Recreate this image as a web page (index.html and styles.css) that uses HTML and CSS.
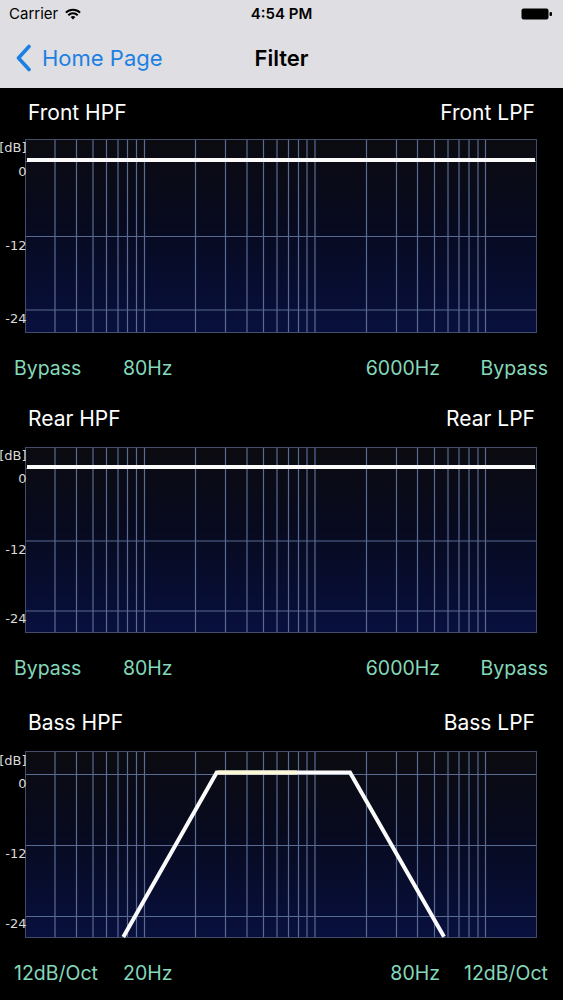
FILE: index.html
```html
<!DOCTYPE html>
<html lang="en">
<head>
<meta charset="utf-8">
<title>Filter</title>
<link rel="stylesheet" href="styles.css">
</head>
<body>
<header class="status-bar">
  <div class="status-left">
    <span class="carrier">Carrier</span>
    <svg class="wifi" width="16" height="12" viewBox="0 0 16 12">
      <path d="M0.9 4.6 A10 10 0 0 1 15.1 4.6" fill="none" stroke="#000" stroke-width="2"/>
      <path d="M3.3 7.2 A6.5 6.5 0 0 1 12.7 7.2" fill="none" stroke="#000" stroke-width="2"/>
      <path d="M8 11.5 L5.6 9.1 A3.4 3.4 0 0 1 10.4 9.1 Z" fill="#000"/>
    </svg>
  </div>
  <div class="status-time">4:54 PM</div>
  <div class="status-right">
    <svg class="battery" width="32" height="12" viewBox="0 0 32 12">
      <rect x="0.5" y="0.5" width="27" height="11" rx="2" fill="#000"/>
      <rect x="28.5" y="4" width="2.5" height="4" rx="1" fill="#000"/>
    </svg>
  </div>
</header>
<nav class="nav-bar">
  <div class="back">
    <svg class="chevron" width="16" height="28" viewBox="0 0 16 28">
      <polyline points="13,2.5 2.5,14 13,25.5" fill="none" stroke="#1c80e3" stroke-width="3.6" stroke-linecap="round" stroke-linejoin="round"/>
    </svg>
    <span class="back-label">Home Page</span>
  </div>
  <div class="nav-title">Filter</div>
  <div></div>
</nav>
<main class="content">
  <section class="filter filter--front">
    <div class="filter-head"><span>Front HPF</span><span>Front LPF</span></div>
    <svg class="graph" width="563" height="194" viewBox="0 0 563 194">
      <defs>
        <linearGradient id="bg1" x1="0" y1="0" x2="0" y2="1">
          <stop offset="0" stop-color="#0b0b10"/>
          <stop offset="0.45" stop-color="#070a1f"/>
          <stop offset="1" stop-color="#08103e"/>
        </linearGradient>
      </defs>
      <rect x="25" y="0" width="512" height="194" fill="url(#bg1)"/>
      <path class="grid" d="M55 0V194M76.5 0V194M93 0V194M106.5 0V194M118 0V194M127.5 0V194M136.5 0V194M144.5 0V194M195.5 0V194M225.5 0V194M247 0V194M263.5 0V194M277 0V194M288.5 0V194M298.5 0V194M307 0V194M315 0V194M366.5 0V194M396.5 0V194M417.5 0V194M434.5 0V194M448 0V194M459 0V194M469 0V194M478 0V194M485.5 0V194M25 22.5H537M25 97.5H537M25 171H537"/>
      <rect class="frame" x="25.5" y="0.5" width="511" height="193"/>
      <path class="curve" d="M27 21H535"/>
      <text class="axis-label" x="26.5" y="12.5">[dB]</text>
      <text class="axis-label" x="26.5" y="37">0</text>
      <text class="axis-label" x="26.5" y="110.5">-12</text>
      <text class="axis-label" x="26.5" y="184">-24</text>
    </svg>
    <div class="filter-values"><span>Bypass</span><span>80Hz</span><span class="end">6000Hz</span><span class="end">Bypass</span></div>
  </section>

  <section class="filter filter--rear">
    <div class="filter-head"><span>Rear HPF</span><span>Rear LPF</span></div>
    <svg class="graph" width="563" height="186" viewBox="0 0 563 186">
      <defs>
        <linearGradient id="bg2" x1="0" y1="0" x2="0" y2="1">
          <stop offset="0" stop-color="#0b0b10"/>
          <stop offset="0.45" stop-color="#070a1f"/>
          <stop offset="1" stop-color="#08103e"/>
        </linearGradient>
      </defs>
      <rect x="25" y="0" width="512" height="186" fill="url(#bg2)"/>
      <path class="grid" d="M55 0V186M76.5 0V186M93 0V186M106.5 0V186M118 0V186M127.5 0V186M136.5 0V186M144.5 0V186M195.5 0V186M225.5 0V186M247 0V186M263.5 0V186M277 0V186M288.5 0V186M298.5 0V186M307 0V186M315 0V186M366.5 0V186M396.5 0V186M417.5 0V186M434.5 0V186M448 0V186M459 0V186M469 0V186M478 0V186M485.5 0V186M25 21.5H537M25 94H537M25 164H537"/>
      <rect class="frame" x="25.5" y="0.5" width="511" height="185"/>
      <path class="curve" d="M27 20H535"/>
      <text class="axis-label" x="26.5" y="12.5">[dB]</text>
      <text class="axis-label" x="26.5" y="35.5">0</text>
      <text class="axis-label" x="26.5" y="106.5">-12</text>
      <text class="axis-label" x="26.5" y="175.5">-24</text>
    </svg>
    <div class="filter-values"><span>Bypass</span><span>80Hz</span><span class="end">6000Hz</span><span class="end">Bypass</span></div>
  </section>

  <section class="filter filter--bass">
    <div class="filter-head"><span>Bass HPF</span><span>Bass LPF</span></div>
    <svg class="graph" width="563" height="187" viewBox="0 0 563 187">
      <defs>
        <linearGradient id="bg3" x1="0" y1="0" x2="0" y2="1">
          <stop offset="0" stop-color="#0b0b10"/>
          <stop offset="0.45" stop-color="#070a1f"/>
          <stop offset="1" stop-color="#08103e"/>
        </linearGradient>
      </defs>
      <rect x="25" y="0" width="512" height="187" fill="url(#bg3)"/>
      <path class="grid" d="M55 0V187M76.5 0V187M93 0V187M106.5 0V187M118 0V187M127.5 0V187M136.5 0V187M144.5 0V187M195.5 0V187M225.5 0V187M247 0V187M263.5 0V187M277 0V187M288.5 0V187M298.5 0V187M307 0V187M315 0V187M366.5 0V187M396.5 0V187M417.5 0V187M434.5 0V187M448 0V187M459 0V187M469 0V187M478 0V187M485.5 0V187M25 23.5H537M25 94.5H537M25 165.5H537"/>
      <rect class="frame" x="25.5" y="0.5" width="511" height="186"/>
      <polyline class="curve" points="123.3,186 216.7,21.5 350,21.5 444,185.7"/>
      <path class="curve curve--tint" d="M218 21.5H297"/>
      <text class="axis-label" x="26.5" y="13.8">[dB]</text>
      <text class="axis-label" x="26.5" y="36.5">0</text>
      <text class="axis-label" x="26.5" y="107">-12</text>
      <text class="axis-label" x="26.5" y="177">-24</text>
    </svg>
    <div class="filter-values"><span>12dB/Oct</span><span>20Hz</span><span class="end">80Hz</span><span class="end">12dB/Oct</span></div>
  </section>
</main>
</body>
</html>
```

FILE: styles.css
```css
html, body {
  margin: 0;
  padding: 0;
}

body {
  width: 563px;
  min-height: 1000px;
  background: #000;
  font-family: Inter, "Noto Sans", "Liberation Sans", sans-serif;
  -webkit-font-smoothing: antialiased;
}

.status-bar {
  height: 28px;
  background: #dfdee2;
  display: grid;
  grid-template-columns: 1fr auto 1fr;
  align-items: center;
  padding: 0 9px;
  color: #000;
}

.status-left {
  display: flex;
  align-items: center;
  gap: 7px;
}

.carrier {
  font-size: 15px;
  line-height: 18px;
}

.wifi {
  display: block;
  margin-top: -1px;
}

.status-time {
  font-size: 15px;
  font-weight: 600;
  line-height: 18px;
}

.status-right {
  display: flex;
  justify-content: flex-end;
  padding-right: 1px;
}

.battery {
  display: block;
}

.nav-bar {
  height: 60px;
  background: #dfdee2;
  display: grid;
  grid-template-columns: 1fr auto 1fr;
  align-items: center;
}

.back {
  display: flex;
  align-items: center;
  gap: 10px;
  padding-left: 16px;
  color: #1c80e3;
  font-size: 22px;
  line-height: 28px;
}

.chevron {
  display: block;
}

.nav-title {
  font-size: 22px;
  font-weight: 600;
  line-height: 28px;
  color: #000;
}

.content {
  padding-top: 12px;
}

.filter-head {
  display: flex;
  justify-content: space-between;
  padding: 0 28px;
  height: 26px;
  line-height: 26px;
  font-size: 21px;
  color: #fff;
}

.graph {
  display: block;
  margin-top: 13px;
}

.filter--rear {
  margin-top: 26px;
}

.filter--bass {
  margin-top: 30px;
}

.filter--rear .graph,
.filter--bass .graph {
  margin-top: 15px;
}

.grid {
  fill: none;
  stroke: #5a6b92;
  stroke-width: 1.2;
}

.frame {
  fill: none;
  stroke: #434d6a;
  stroke-width: 1;
}

.curve {
  fill: none;
  stroke: #fbfbfb;
  stroke-width: 4;
  stroke-linejoin: miter;
}

.curve--tint {
  stroke: #fdf9d8;
}

.axis-label {
  font-family: "DejaVu Sans", Verdana, sans-serif;
  font-size: 13px;
  fill: #dadada;
  text-anchor: end;
}

.filter-values {
  display: grid;
  grid-template-columns: 109px 1fr 1fr 108px;
  padding: 0 15px 0 14px;
  margin-top: 23px;
  height: 24px;
  line-height: 24px;
  font-size: 19.5px;
  color: #84d8bb;
}

.filter-values .end {
  text-align: right;
}
```
